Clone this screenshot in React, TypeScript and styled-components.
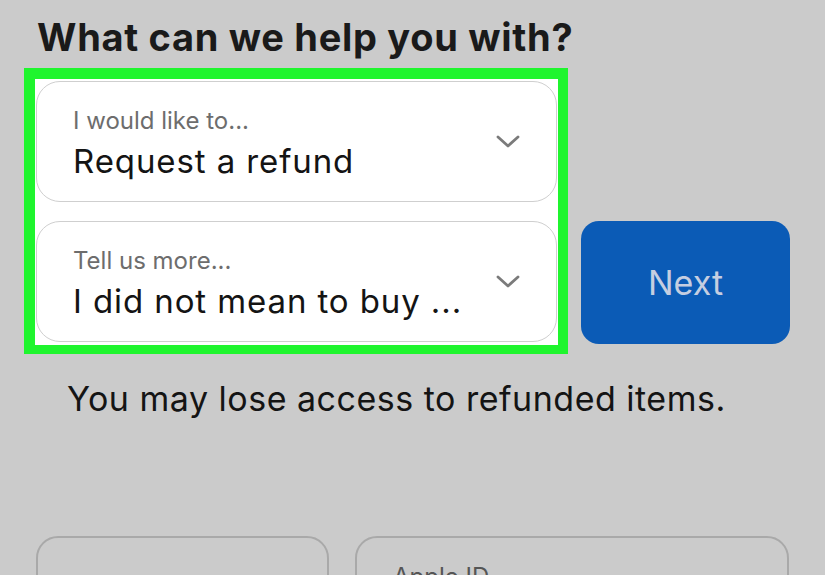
import styled, { createGlobalStyle } from 'styled-components';

const GlobalStyle = createGlobalStyle`
	html, body {
		margin: 0;
		padding: 0;
		background: #cbcbcb;
		font-family: Inter, 'Liberation Sans', sans-serif;
	}
	body {
		width: 825px;
		height: 575px;
		overflow: hidden;
	}
`;

const ChevronDown = () => (
	<svg width="24" height="14" viewBox="0 0 24 14" fill="none">
		<path d="M2 2 L12 11 L22 2" stroke="#7b7b7b" strokeWidth="2.8" strokeLinecap="round" strokeLinejoin="round" />
	</svg>
);

interface PickerProps {
	label: string;
	value: string;
}

const Picker = ({ label, value }: PickerProps) => (
	<PickerCard>
		<PickerText>
			<PickerLabel>{label}</PickerLabel>
			<PickerValue>{value}</PickerValue>
		</PickerText>
		<ChevronDown />
	</PickerCard>
);

const App = () => {
	return (
		<>
			<GlobalStyle />
			<Page>
				<Title>What can we help you with?</Title>
				<FormRow>
					<Highlight>
						<Picker label="I would like to..." value="Request a refund" />
						<Picker label="Tell us more..." value="I did not mean to buy ..." />
					</Highlight>
					<NextButton type="button">Next</NextButton>
				</FormRow>
				<Note>You may lose access to refunded items.</Note>
				<FieldRow>
					<Field $width={293} />
					<Field $width={434}>
						<FieldLabel>Apple ID</FieldLabel>
					</Field>
				</FieldRow>
			</Page>
		</>
	);
};

export default App;

const Page = styled.div`
	display: flex;
	flex-direction: column;
	padding: 14px 0 0 24px;
`;

const Title = styled.h1`
	margin: 0 0 8px 13px;
	font-size: 38px;
	line-height: 46px;
	font-weight: 700;
	color: #1a1a1a;
	letter-spacing: 0.7px;
`;

const FormRow = styled.div`
	display: flex;
	align-items: flex-end;
	gap: 13px;
`;

const Highlight = styled.div`
	width: 521px;
	border: 11px solid #1ff52e;
	border-right-width: 10px;
	border-bottom-width: 9px;
	background: #ffffff;
	padding: 2px 1px 3px 1px;
	display: flex;
	flex-direction: column;
	gap: 19px;
`;

const PickerCard = styled.div`
	height: 121px;
	box-sizing: border-box;
	border: 1.5px solid #cfcfcf;
	border-radius: 24px;
	display: flex;
	align-items: center;
	padding: 0 36px 0 36px;
`;

const PickerText = styled.div`
	flex: 1;
	display: flex;
	flex-direction: column;
	gap: 4px;
	margin-top: 4px;
`;

const PickerLabel = styled.span`
	font-size: 24px;
	line-height: 30px;
	color: #6d6d6d;
`;

const PickerValue = styled.span`
	font-size: 33px;
	line-height: 42px;
	color: #141414;
	letter-spacing: 0.9px;
`;

const NextButton = styled.button`
	width: 209px;
	height: 123px;
	margin-bottom: 10px;
	border: none;
	border-radius: 18px;
	background: #0b5bb6;
	color: #c5cee1;
	font-family: Inter, 'Liberation Sans', sans-serif;
	font-size: 34px;
	padding: 0;
`;

const Note = styled.p`
	margin: 24px 0 0 43px;
	font-size: 34px;
	line-height: 42px;
	color: #141414;
	letter-spacing: 0.5px;
`;

const FieldRow = styled.div`
	display: flex;
	gap: 26px;
	margin: 116px 0 0 12px;
`;

const Field = styled.div<{ $width: number }>`
	width: ${(p) => p.$width}px;
	height: 80px;
	box-sizing: border-box;
	border: 2px solid #a9a9a9;
	border-radius: 22px;
	padding: 24px 0 0 36px;
`;

const FieldLabel = styled.span`
	font-size: 24px;
	color: #555555;
`;
